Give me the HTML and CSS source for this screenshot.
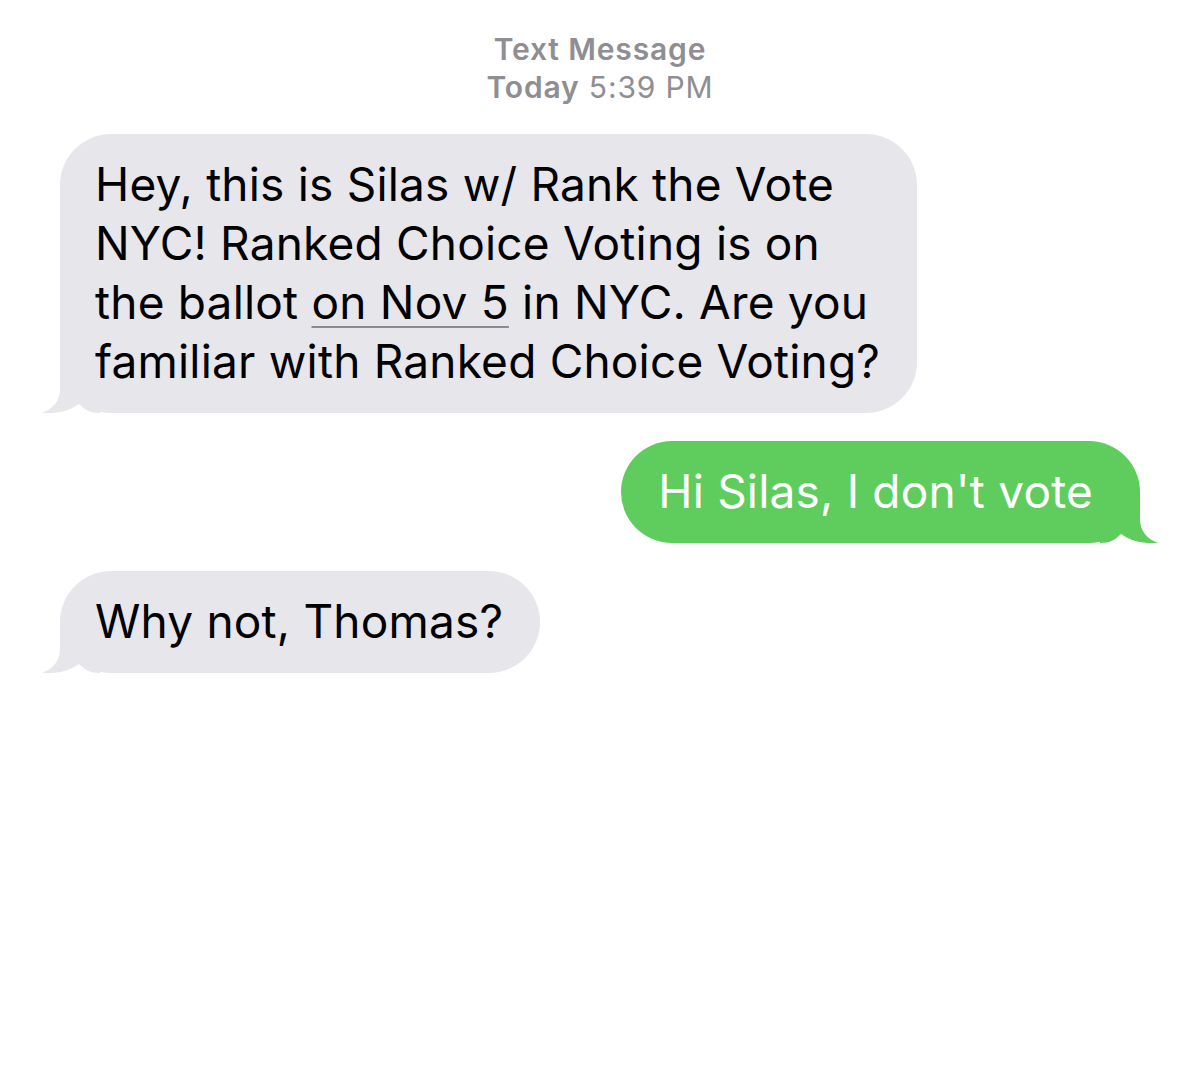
FILE: index.html
```html
<!DOCTYPE html>
<html>
<head>
<meta charset="utf-8">
<link rel="stylesheet" href="styles.css">
</head>
<body>
<div class="thread">
  <div class="header">
    <div class="service">Text Message</div>
    <div class="stamp"><span class="day">Today</span> 5:39 PM</div>
  </div>

  <div class="row row-in">
    <div class="bubble in">
      Hey, this is Silas w/ Rank the Vote<br>NYC! Ranked Choice Voting is on<br>the ballot <span class="link">on Nov 5</span> in NYC. Are you<br>familiar with Ranked Choice Voting?
      <svg class="tail tail-in" viewBox="0 0 62 50" width="62" height="50"><path d="M20 0 L20 26 C20 38 13 46 2 50 C17 51 29 48 39 41 C45 47 50 50 60 50 L62 0 Z"/></svg>
    </div>
  </div>

  <div class="row row-out">
    <div class="bubble out">
      Hi Silas, I don't vote
      <svg class="tail tail-out" viewBox="0 0 62 50" width="62" height="50"><path d="M20 0 L20 26 C20 38 13 46 2 50 C17 51 29 48 39 41 C45 47 50 50 60 50 L62 0 Z"/></svg>
    </div>
  </div>

  <div class="row row-in">
    <div class="bubble in">
      Why not, Thomas?
      <svg class="tail tail-in" viewBox="0 0 62 50" width="62" height="50"><path d="M20 0 L20 26 C20 38 13 46 2 50 C17 51 29 48 39 41 C45 47 50 50 60 50 L62 0 Z"/></svg>
    </div>
  </div>
</div>
</body>
</html>
```

FILE: styles.css
```css
html, body {
  margin: 0;
  padding: 0;
  background: #ffffff;
}

.thread {
  width: 1200px;
  display: flex;
  flex-direction: column;
  padding-top: 30px;
  font-family: Inter, "Noto Sans", "Liberation Sans", sans-serif;
}

.header {
  display: flex;
  flex-direction: column;
  align-items: center;
  color: #8e8e93;
  font-size: 30px;
  line-height: 38px;
  letter-spacing: 0.85px;
  margin-bottom: 28px;
}

.service {
  font-weight: 600;
}

.stamp {
  font-weight: 400;
}

.day {
  font-weight: 600;
}

.row {
  display: flex;
  margin-bottom: 28px;
}

.row-in {
  justify-content: flex-start;
  padding-left: 60px;
}

.row-out {
  justify-content: flex-end;
  padding-right: 60px;
}

.bubble {
  position: relative;
  isolation: isolate;
  font-size: 46px;
  line-height: 59px;
  padding: 21px 37px 22px 35px;
  border-radius: 51px;
  letter-spacing: 0.2px;
}

.bubble.in {
  background: #e6e6eb;
  color: #000000;
}

.bubble.out {
  background: #5fcd5e;
  color: #ffffff;
  padding-right: 47px;
  padding-left: 37px;
}

.link {
  text-decoration: underline;
  text-decoration-color: #8a8a8f;
  text-decoration-thickness: 2px;
  text-underline-offset: 7px;
}

.tail {
  position: absolute;
  bottom: 0;
  display: block;
  z-index: -1;
}

.tail-in {
  left: -20px;
  fill: #e6e6eb;
}

.tail-out {
  right: -20px;
  fill: #5fcd5e;
  transform: scaleX(-1);
}
```
